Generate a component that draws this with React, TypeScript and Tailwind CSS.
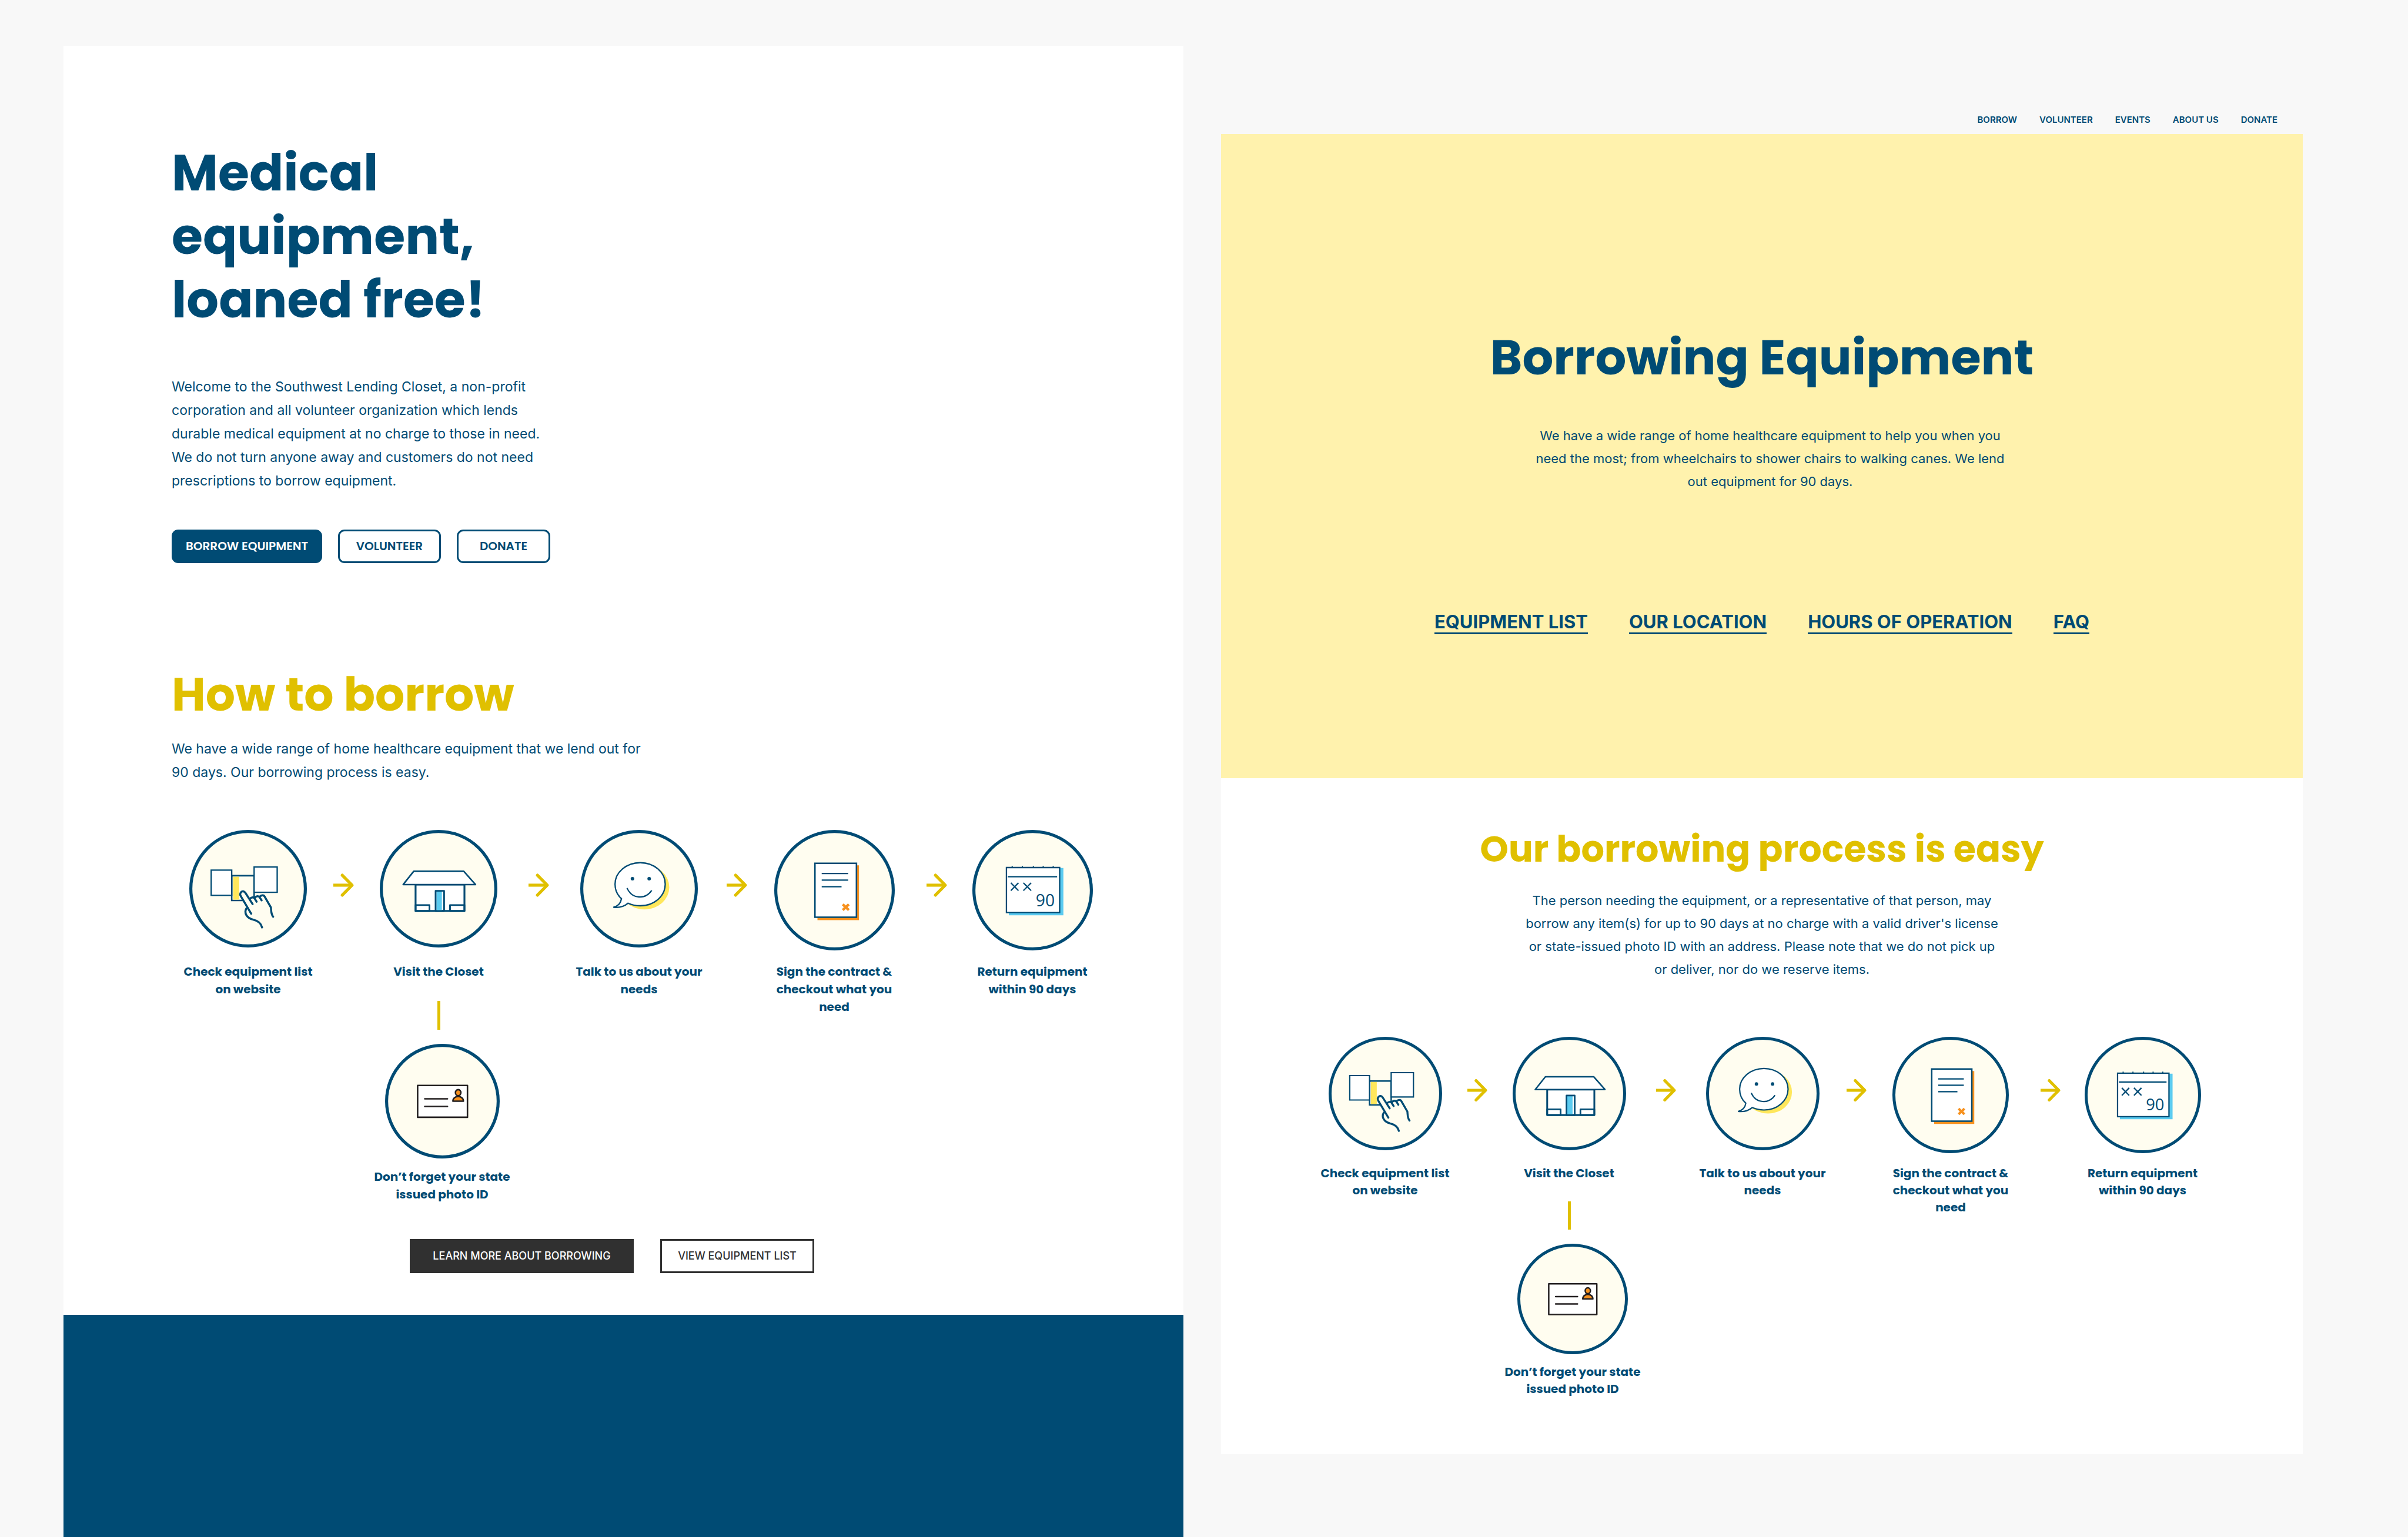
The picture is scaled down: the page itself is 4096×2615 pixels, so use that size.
import type { ReactNode } from "react";

const NAVY = "#004b74";
const GOLD = "#e0c000";
const CREAM = "#fffdf0";
const YELLOW = "#ffe75c";
const SKY = "#5bcbf0";
const ORANGE = "#f7911e";
const INK = "#231f20";

function Badge({ x = 0, y = 0, size, children, className }: { x?: number; y?: number; size: number; children: ReactNode; className: string }) {
  return (
    <svg viewBox={`${x} ${y} ${size} ${size}`} className={className} fill="none" stroke={NAVY} aria-hidden="true">
      <circle cx={x + size / 2} cy={y + size / 2} r={size / 2 - 9} fill={CREAM} strokeWidth="18" />
      {children}
    </svg>
  );
}

function ListBadge({ className }: { className: string }) {
  return (
    <Badge x={-51} y={-142} size={693} className={className}>
      <path d="M199 128H331V274H199Z" strokeWidth="9" />
      <path d="M207 134H243V269H207Z" fill={YELLOW} stroke="none" />
      <path d="M78 95H199V244H78Z" fill="#fff" strokeWidth="8" />
      <path d="M331 77H467V226H331Z" fill="#fff" strokeWidth="8" />
      <path
        d="M314 352L249 243C243 225 264 207 279 226L305 262C318 250 328 253 335 258C348 244 358 247 363 252C372 240 386 240 392 250L430 315C432 335 430 350 443 370L378 433C370 405 350 392 320 386C283 375 268 345 285 322Z"
        fill={CREAM}
        stroke="none"
      />
      <g strokeWidth="12" strokeLinecap="round" strokeLinejoin="round">
        <path d="M314 352L251 246C243 228 264 208 279 228L322 295" />
        <path d="M306 263C318 253 329 253 334 262L346 281" />
        <path d="M335 258C346 245 358 246 364 256L375 273" />
        <path d="M364 251C374 242 388 240 393 251L430 315C432 335 430 352 443 370" />
        <path d="M285 322C271 347 286 377 325 387C352 393 372 410 378 433" />
      </g>
    </Badge>
  );
}

function HouseBadge({ className }: { className: string }) {
  return (
    <Badge x={144} y={98} size={693} className={className}>
      <g strokeLinejoin="round">
        <path d="M355 420H643V576H355Z" fill="#fff" strokeWidth="11" />
        <path d="M282 420L344 342H639L708 420Z" fill="#fff" strokeWidth="9" />
        <path d="M355 541H437V576H355ZM558 541H643V576H558Z" strokeWidth="10" />
        <path d="M478 460H510V574H478Z" fill={SKY} stroke="none" />
        <path d="M473 457H523V576H473Z" strokeWidth="10" />
      </g>
    </Badge>
  );
}

function TalkBadge({ className }: { className: string }) {
  return (
    <Badge x={-118} y={-117} size={696} className={className}>
      <ellipse cx="262" cy="222" rx="147" ry="132" fill={YELLOW} stroke="none" />
      <path
        d="M126 290C98 266 88 232 88 204C88 134 155 77 237 77C320 77 385 134 385 204C385 275 320 332 237 332C212 332 187 327 165 317C145 335 118 345 78 341C108 334 122 316 126 290Z"
        fill="#fff"
        strokeWidth="8"
      />
      <circle cx="191" cy="172" r="10.5" fill={NAVY} stroke="none" />
      <circle cx="290" cy="172" r="10.5" fill={NAVY} stroke="none" />
      <path d="M159 227C188 294 268 296 305 241" strokeWidth="8" />
    </Badge>
  );
}

function ContractBadge({ className }: { className: string }) {
  return (
    <Badge size={711} className={className}>
      <path d="M255 209H500V532H255Z" fill={ORANGE} stroke="none" />
      <path d="M240 197H485V515H240Z" fill="#fff" strokeWidth="9" />
      <path d="M280 257H436M280 296H436M280 335H397" strokeWidth="8" />
      <path d="M404 439L440 473M440 439L404 473" stroke={ORANGE} strokeWidth="15" />
    </Badge>
  );
}

function CalendarBadge({ className }: { className: string }) {
  return (
    <Badge size={711} className={className}>
      <path d="M215 225H537V504H215Z" fill={SKY} stroke="none" />
      <path d="M201 222H515V488H201Z" fill="#fff" strokeWidth="8" />
      <path d="M209 276H500" strokeWidth="8" />
      <path d="M235 213V222M295 213V222M360 213V222M418 213V222M477 213V222" strokeWidth="7" />
      <path d="M227 312L272 358M272 312L227 358M301 312L347 358M347 312L301 358" strokeWidth="8" />
      <text x="374" y="450" fill={NAVY} stroke="none" fontSize="98" fontWeight="400" fontFamily="'Open Sans', 'Noto Sans', sans-serif">
        90
      </text>
    </Badge>
  );
}

function CardBadge({ className }: { className: string }) {
  return (
    <Badge size={676} className={className}>
      <g stroke={INK}>
        <path d="M192 245H486V433H192Z" fill="#fff" strokeWidth="9" strokeLinejoin="round" />
        <path d="M234 324H368M234 369H368" strokeWidth="9" strokeLinecap="round" />
        <path d="M400 338C400 301 462 301 462 338Z" fill={ORANGE} strokeWidth="9" strokeLinejoin="round" />
        <ellipse cx="431" cy="288" rx="16" ry="18" fill={ORANGE} strokeWidth="9" />
      </g>
    </Badge>
  );
}

function Arrow({ className }: { className: string }) {
  return (
    <svg viewBox="0 0 122 136" className={className} fill="none" stroke={GOLD} strokeWidth="18" aria-hidden="true">
      <path d="M0 68H108" />
      <path d="M53 9L111 68L53 127" strokeLinecap="round" strokeLinejoin="round" />
    </svg>
  );
}

type Sizes = {
  grid: string;
  slot: string;
  small: string;
  large: string;
  card: string;
  label: string;
  arrow: string;
  line: string;
  cardBlock: string;
};

const wide: Sizes = {
  grid: "grid grid-cols-[240fr_84fr_240fr_101fr_240fr_92fr_240fr_109fr_216fr]",
  slot: "flex h-[226px] items-start justify-center",
  small: "size-[200px]",
  large: "size-[205px]",
  card: "size-[195px]",
  label: "text-center font-[Poppins,Inter,sans-serif] text-[20px] leading-[30px] font-bold",
  arrow: "mt-[74px] h-[40px] w-[35px] justify-self-center",
  line: "mt-[35px] h-[49px] w-[5px] bg-[#e0c000]",
  cardBlock: "mt-6 flex flex-col items-center gap-4 pl-3",
};

const compact: Sizes = {
  grid: "grid grid-cols-[232fr_81fr_232fr_97fr_232fr_88fr_232fr_107fr_207fr]",
  slot: "flex h-[218px] items-start justify-center",
  small: "size-[193px]",
  large: "size-[198px]",
  card: "size-[188px]",
  label: "text-center font-[Poppins,Inter,sans-serif] text-[20px] leading-[29px] font-bold",
  arrow: "mt-[72px] h-[38px] w-[34px] justify-self-center",
  line: "mt-[33px] h-[48px] w-[5px] bg-[#e0c000]",
  cardBlock: "mt-6 flex flex-col items-center gap-4 pl-3",
};

function Step({ s, icon, lines, children }: { s: Sizes; icon: ReactNode; lines: string[]; children?: ReactNode }) {
  return (
    <div className="flex min-w-0 flex-col items-center">
      <div className={s.slot}>{icon}</div>
      <Label s={s} lines={lines} />
      {children}
    </div>
  );
}

function Label({ s, lines }: { s: Sizes; lines: string[] }) {
  return (
    <p className={s.label}>
      {lines.map((line) => (
        <span key={line} className="block whitespace-nowrap">
          {line}
        </span>
      ))}
    </p>
  );
}

function Steps({ s }: { s: Sizes }) {
  return (
    <div className={s.grid}>
      <Step s={s} icon={<ListBadge className={s.small} />} lines={["Check equipment list", "on website"]} />
      <Arrow className={s.arrow} />
      <Step s={s} icon={<HouseBadge className={s.small} />} lines={["Visit the Closet"]}>
        <div className={s.line} />
        <div className={s.cardBlock}>
          <CardBadge className={s.card} />
          <Label s={s} lines={["Don’t forget your state", "issued photo ID"]} />
        </div>
      </Step>
      <Arrow className={s.arrow} />
      <Step s={s} icon={<TalkBadge className={s.small} />} lines={["Talk to us about your", "needs"]} />
      <Arrow className={s.arrow} />
      <Step s={s} icon={<ContractBadge className={s.large} />} lines={["Sign the contract &", "checkout what you", "need"]} />
      <Arrow className={s.arrow} />
      <Step s={s} icon={<CalendarBadge className={s.large} />} lines={["Return equipment", "within 90 days"]} />
    </div>
  );
}

function HomePanel() {
  return (
    <section className="flex flex-[1905] flex-col bg-white">
      <div className="pt-[162px] pl-[184px]">
        <h1 className="max-w-[560px] font-[Poppins,Inter,sans-serif] text-[86px] leading-[108px] font-bold">Medical equipment, loaned free!</h1>
        <p className="mt-[74px] max-w-[640px] text-[23px] leading-[40px]">
          Welcome to the Southwest Lending Closet, a non-profit corporation and all volunteer organization which lends durable medical
          equipment at no charge to those in need. We do not turn anyone away and customers do not need prescriptions to borrow
          equipment.
        </p>
        <div className="mt-[63px] flex gap-[27px] font-[Poppins,Inter,sans-serif] text-[20px] leading-[51px] font-semibold">
          <button type="button" className="w-[256px] rounded-[11px] border-[3px] border-[#004b74] bg-[#004b74] text-white">
            BORROW EQUIPMENT
          </button>
          <button type="button" className="w-[175px] rounded-[11px] border-[3px] border-[#004b74]">
            VOLUNTEER
          </button>
          <button type="button" className="w-[159px] rounded-[11px] border-[3px] border-[#004b74]">
            DONATE
          </button>
        </div>
        <h2 className="mt-44 font-[Poppins,Inter,sans-serif] text-[79px] leading-[96px] font-bold text-[#e0c000]">How to borrow</h2>
        <p className="mt-6 max-w-[810px] text-[23px] leading-[40px]">
          We have a wide range of home healthcare equipment that we lend out for 90 days. Our borrowing process is easy.
        </p>
      </div>
      <div className="mt-[78px] pr-[149px] pl-[194px]">
        <Steps s={wide} />
      </div>
      <div className="mt-[61px] mb-[71px] flex justify-center gap-[45px] pr-[39px] text-[18px] leading-[52px] font-medium text-[#303030]">
        <button type="button" className="w-[381px] border-[3px] border-[#303030] bg-[#303030] text-white">
          LEARN MORE ABOUT BORROWING
        </button>
        <button type="button" className="w-[262px] border-[3px] border-[#303030]">
          VIEW EQUIPMENT LIST
        </button>
      </div>
      <div className="flex-1 bg-[#004b74]" />
    </section>
  );
}

function BorrowPanel() {
  return (
    <section className="flex flex-[1840] flex-col">
      <nav className="flex justify-end gap-[38px] pt-[115px] pr-[43px] pb-[13px] text-[15px] leading-[22px] font-semibold">
        <a href="#borrow">BORROW</a>
        <a href="#volunteer">VOLUNTEER</a>
        <a href="#events">EVENTS</a>
        <a href="#about">ABOUT US</a>
        <a href="#donate">DONATE</a>
      </nav>
      <header className="flex flex-col items-center bg-[#fff2ad] pt-[326px] pb-[245px] text-center">
        <h1 className="font-[Poppins,Inter,sans-serif] text-[83px] leading-[108px] font-bold">Borrowing Equipment</h1>
        <div className="mt-[60px] pl-7">
          <p className="max-w-[810px] text-[22px] leading-[39px]">
            We have a wide range of home healthcare equipment to help you when you need the most; from wheelchairs to shower chairs to
            walking canes. We lend out equipment for 90 days.
          </p>
        </div>
        <div className="mt-[200px] flex gap-[70px] text-[31px] leading-[37px] font-bold">
          <a href="#equipment" className="border-b-[3px] border-[#004b74]">
            EQUIPMENT LIST
          </a>
          <a href="#location" className="border-b-[3px] border-[#004b74]">
            OUR LOCATION
          </a>
          <a href="#hours" className="border-b-[3px] border-[#004b74]">
            HOURS OF OPERATION
          </a>
          <a href="#faq" className="border-b-[3px] border-[#004b74]">
            FAQ
          </a>
        </div>
      </header>
      <div className="flex flex-col bg-white pt-[81px] pb-24">
        <div className="flex flex-col items-center text-center">
          <h2 className="font-[Poppins,Inter,sans-serif] text-[62px] leading-[80px] font-bold text-[#e0c000]">Our borrowing process is easy</h2>
          <p className="mt-7 max-w-[815px] text-[22px] leading-[39px]">
            The person needing the equipment, or a representative of that person, may borrow any item(s) for up to 90 days at no charge
            with a valid driver's license or state-issued photo ID with an address. Please note that we do not pick up or deliver, nor do
            we reserve items.
          </p>
        </div>
        <div className="mt-[95px] pr-[169px] pl-[163px]">
          <Steps s={compact} />
        </div>
      </div>
    </section>
  );
}

export default function App() {
  return (
    <main className="flex min-h-screen gap-16 bg-[#f8f8f8] pt-[78px] pr-[179px] pl-[108px] font-[Inter,sans-serif] text-[#004b74]">
      <HomePanel />
      <BorrowPanel />
    </main>
  );
}
